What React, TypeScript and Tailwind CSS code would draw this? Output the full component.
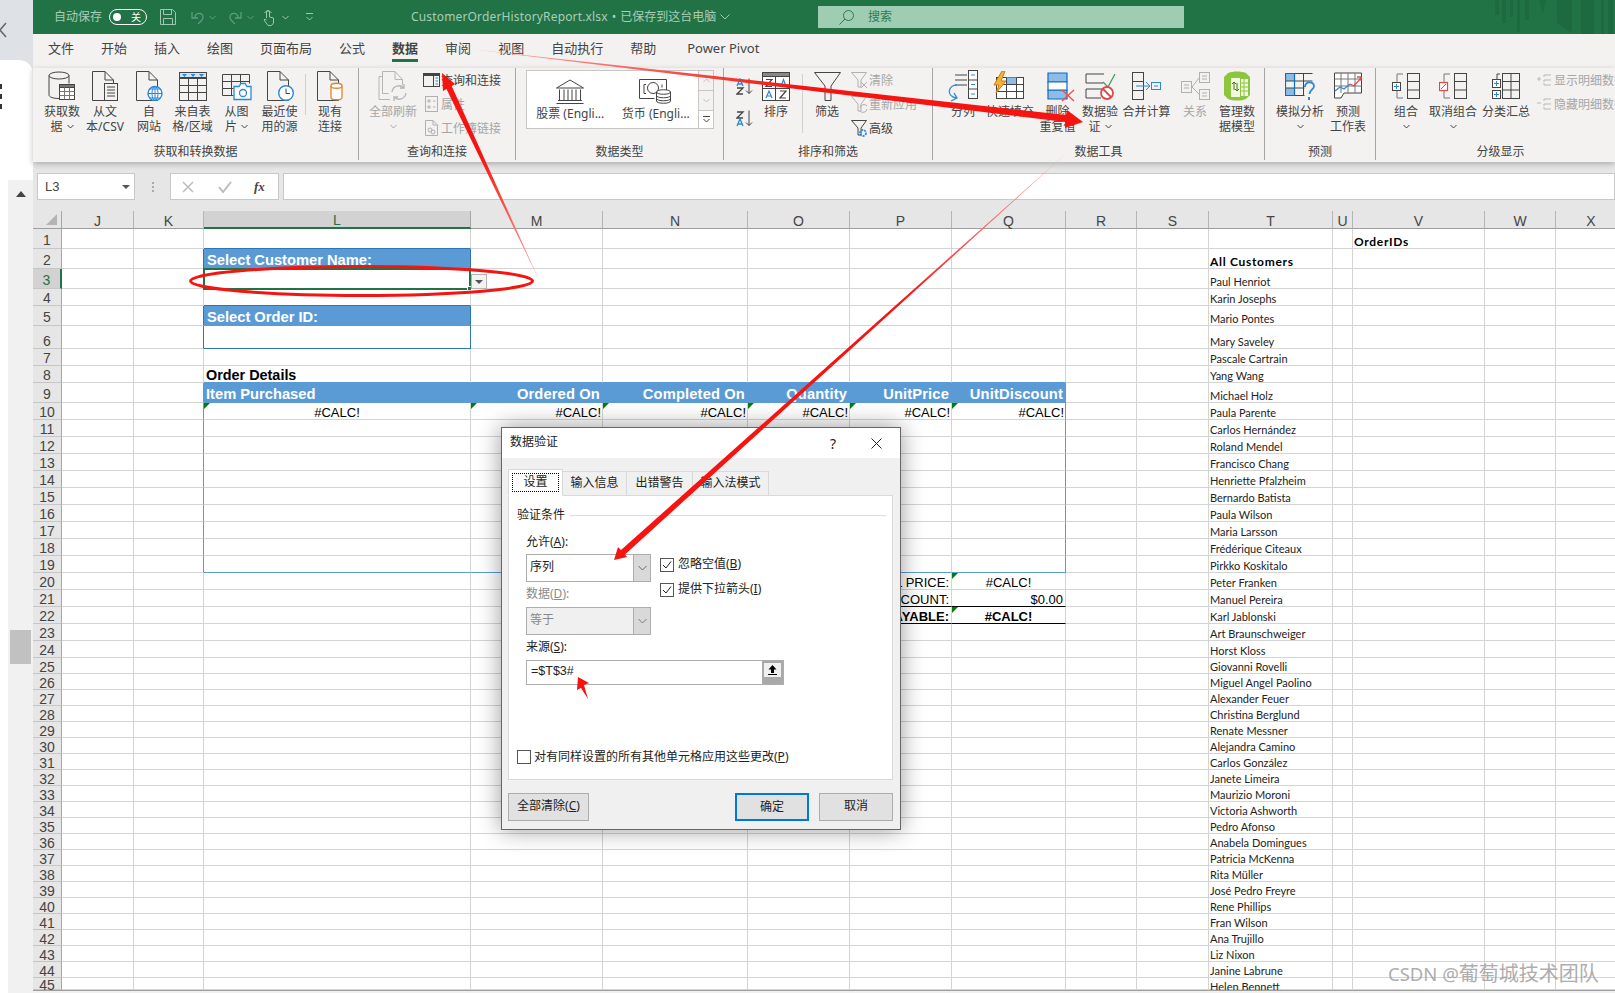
import React from "react";

const D = "#444444";
const G = "#a6a6a6";
const B = "#2b88d8";

const Svg = ({ w, h, c = D, children }: { w: number; h: number; c?: string; children: React.ReactNode }) => (
  <svg width={w} height={h} viewBox={`0 0 ${w} ${h}`} fill="none" stroke={c} strokeWidth={1} className="shrink-0">
    {children}
  </svg>
);

const Caret = ({ c = D, cls = "" }: { c?: string; cls?: string }) => (
  <svg width="7" height="5" viewBox="0 0 7 5" fill="none" stroke={c} className={`inline-block shrink-0 ${cls}`}>
    <path d="M.5 1L3.5 4L6.5 1" />
  </svg>
);

const Doc = ({ c = D }: { c?: string }) => <path d="M1.5.5H14L22.5 9V29.5H1.5Z M14 .5V9h8.5" stroke={c} />;

const IGetData = () => (
  <Svg w={28} h={30}>
    <ellipse cx="11" cy="4.5" rx="10" ry="3.5" />
    <path d="M1 4.5V24c0 2 4 3.5 10 3.5M21 4.5v8" />
    <rect x="11.5" y="13.5" width="15" height="15" fill="#fff" />
    <path d="M11.5 13.5h15v3h-15z" fill="#777" />
    <path d="M11.5 20.5h15M11.5 24.5h15M16.5 16.5v12M21.5 16.5v12" stroke="#777" />
  </Svg>
);
const IText = () => (
  <Svg w={28} h={30}>
    <Doc />
    <rect x="13.5" y="12.5" width="13" height="17" fill="#f3f2f1" />
    <path d="M16 16h8M16 19h8M16 22h8M16 25h8" />
  </Svg>
);
const IWeb = () => (
  <Svg w={28} h={30}>
    <Doc />
    <circle cx="20" cy="22.5" r="7" fill="#fff" stroke={B} strokeWidth="1.4" />
    <path d="M13 22.5h14M20 15.5v14M15 18h10M15 27h10" stroke={B} />
    <ellipse cx="20" cy="22.5" rx="3" ry="7" stroke={B} />
  </Svg>
);
const ITable = () => (
  <Svg w={28} h={29}>
    <rect x=".5" y=".5" width="27" height="28" />
    <path d="M.5 6.5h27" />
    <path d="M.5 .5h27v5H.5z" fill="#cfe4f6" />
    <path d="M3 2h5L5.5 5zM11.500 2h5L14 5zM20 2h5l-2.500 3z" fill={B} stroke="none" />
    <path d="M.5 13.500h27M.5 20.500h27M9.500 6.500v22M18.500 6.500v22" />
  </Svg>
);
const IPic = () => (
  <Svg w={30} h={30}>
    <path d="M.5 3.500h27v9M.5 3.500v21h11" />
    <path d="M.5 10.500h27M.5 17.500h11M9.500 3.500v21M18.500 3.500v9" />
    <path d="M12 15.500h5l2-3h4l2 3h4v13H12z" fill="#fff" stroke={B} strokeWidth="1.300" />
    <circle cx="21" cy="22" r="3.500" stroke={B} strokeWidth="1.300" />
  </Svg>
);
const IRecent = () => (
  <Svg w={28} h={30}>
    <Doc />
    <circle cx="20" cy="22" r="7.300" fill="#fff" stroke={B} strokeWidth="1.400" />
    <path d="M20 17.500V22.500H24" stroke={D} />
  </Svg>
);
const IExisting = () => (
  <Svg w={28} h={30}>
    <Doc />
    <path d="M15 14.500c0-3 11-3 11 0v12c0 3-11 3-11 0z" fill="#fff" stroke="#e3862a" strokeWidth="1.300" />
    <path d="M15 15c0 3 11 3 11 0" stroke="#e3862a" strokeWidth="1.300" />
  </Svg>
);
const IRefresh = () => (
  <Svg w={30} h={30} c="#b5b5b5">
    <path d="M1 5.500h3M1 5.500v23h11" />
    <path d="M4.500 .5H17L24.500 8.500V14M4.500 .5v22h6M17 .5v8h7.500" />
    <path d="M14 21a7 7 0 0 1 12-4M28 22a7 7 0 0 1-12 4" strokeWidth="1.300" />
    <path d="M26 13v4h-4M16 30v-4h4" strokeWidth="1.300" />
  </Svg>
);
const IQuery = () => (
  <Svg w={17} h={14}>
    <rect x=".5" y=".5" width="16" height="13" />
    <path d="M.5 2h16" strokeWidth="2" />
    <path d="M10.500 2.500v11" />
    <path d="M12.500 5h2.500M12.500 8h2.500M12.500 11h2.500" stroke={B} />
  </Svg>
);
const IProps = () => (
  <Svg w={13} h={16} c="#b0b0b0">
    <rect x=".5" y=".5" width="12" height="15" />
    <path d="M3 4h2v2H3zM3 10h2v2H3zM8 5h2.500M8 11h2.500" />
  </Svg>
);
const ILinks = () => (
  <Svg w={13} h={16} c="#b0b0b0">
    <path d="M.5.5H8L12.500 5V15.500H.5zM8 .5V5h4.500" />
    <circle cx="5" cy="10" r="2" />
    <circle cx="8" cy="12" r="2" />
  </Svg>
);
const IBank = () => (
  <Svg w={28} h={25}>
    <path d="M.5 9L14 1L27.500 9z" />
    <path d="M3.500 10.500V21M8 10.500V21M12 10.500V21M16 10.500V21M20 10.500V21M24.500 10.500V21M2 21.500h24M.5 24.500h27" />
  </Svg>
);
const ICurrency = () => (
  <Svg w={33} h={26}>
    <path d="M.5 1.500h27V14M.5 1.500v19h15" />
    <path d="M5 6.500v9M5 6.500h2M5 15.500h2M23 6.500v3" />
    <circle cx="14" cy="10" r="5.500" />
    <g fill="#fff">
      <path d="M17.500 14c0-3 14-3 14 0v9c0 3-14 3-14 0z" />
      <path d="M17.500 14c0 3 14 3 14 0M17.500 17.500c0 3 14 3 14 0M17.500 20.500c0 3 14 3 14 0" fill="none" />
    </g>
  </Svg>
);
const IAZ = ({ flip }: { flip?: boolean }) => (
  <Svg w={17} h={17}>
    <path d="M13 .5V15.500M10 12.500L13 15.500L16 12.500" />
    <g strokeWidth="1.300">
      {flip ? (
        <>
          <path d="M1 2h6L1 8h6" stroke={D} />
          <path d="M1 16l3-7 3 7M2 14h4" stroke={B} />
        </>
      ) : (
        <>
          <path d="M1 8l3-7 3 7M2 6h4" stroke={B} />
          <path d="M1 10h6L1 16h6" stroke={D} />
        </>
      )}
    </g>
  </Svg>
);
const ISort = () => (
  <Svg w={28} h={29}>
    <rect x=".5" y=".5" width="27" height="28" fill="#fff" />
    <path d="M.5 .5h27v4H.5z" fill="#888" />
    <path d="M.5 16.500h27M13.500 4.500v24" />
    <path d="M4 7.500h6L4 14.500h6" strokeWidth="1.200" />
    <path d="M19 14.500l2.500-7 2.500 7M20 12.500h3" stroke={B} strokeWidth="1.200" />
    <path d="M4 26l3-7 3 7M5 24h4" stroke={B} strokeWidth="1.200" />
    <path d="M18 19h6L18 26h6" strokeWidth="1.200" />
  </Svg>
);
const IFunnel = () => (
  <Svg w={27} h={29}>
    <path d="M.5.5h26L17 14v14.500h-6V14z" />
  </Svg>
);
const IMiniFunnel = ({ kind }: { kind: "x" | "r" | "a" }) => (
  <Svg w={17} h={17} c={kind === "a" ? D : "#b0b0b0"}>
    <path d="M.5.5h15L10 8v7H7V8z" />
    {kind === "x" && <path d="M10 10l6 6M16 10l-6 6" />}
    {kind === "r" && <path d="M9 12a4 4 0 0 1 7-2M16 13a4 4 0 0 1-7 2" />}
    {kind === "a" && <circle cx="12" cy="13" r="3" stroke={B} strokeWidth="1.800" strokeDasharray="2 1" />}
  </Svg>
);
const ISplit = () => (
  <Svg w={30} h={32}>
    <path d="M7 5h12M7 10h12M7 15h12" />
    <rect x="20.500" y=".5" width="9" height="28" fill="#fff" />
    <path d="M20.500 10h9M20.500 19h9" />
    <path d="M23 5h4M23 14.500h4M23 24h4" stroke={B} />
    <path d="M9 15c-9 0-11 11-1 13M3 31l6-3-3-5" stroke={B} strokeWidth="1.300" />
  </Svg>
);
const IFlash = () => (
  <Svg w={31} h={30}>
    <rect x="3.500" y="6.500" width="27" height="21" fill="#fff" />
    <path d="M13 6.500h11v7H13z" fill="#8dbde6" stroke="none" />
    <path d="M3.500 13.500h27M3.500 20.500h27M13.500 6.500v21M23.500 6.500v21" />
    <path d="M9 0L1 14h5L3 22l10-12H8l4-10z" fill="#f5b335" stroke="#c8791a" />
  </Svg>
);
const IDedupe = () => (
  <Svg w={28} h={31}>
    <path d="M1 2h19v9H1zM1 19h19v9H1z" fill="#8dbde6" stroke="#0f6cbd" strokeWidth="1.200" />
    <path d="M1 11h19v8H1z" fill="#fff" stroke="#0f6cbd" strokeWidth="1.200" />
    <path d="M15 19l12 11M27 19L15 30" stroke="#ef4d4d" strokeWidth="1.300" />
  </Svg>
);
const IValidate = () => (
  <Svg w={31} h={29}>
    <path d="M19 2H1v9h17" />
    <path d="M18 10l5 5L30 2" stroke="#3aa05a" strokeWidth="1.300" />
    <path d="M19 17H1v9h15" />
    <circle cx="22" cy="21" r="6" fill="#fff" stroke="#e24848" strokeWidth="1.800" />
    <path d="M18 17l8 8" stroke="#e24848" strokeWidth="1.800" />
  </Svg>
);
const IConsolidate = () => (
  <Svg w={29} h={28}>
    <rect x=".5" y=".5" width="11" height="27" />
    <path d="M.5 9.500h11M.5 18.500h11" />
    <path d="M4 14h13M14 10l4 4-4 4" stroke={B} />
    <rect x="19.500" y="10.500" width="9" height="7" stroke={B} />
    <path d="M22 14h4" stroke={B} />
  </Svg>
);
const IRelations = () => (
  <Svg w={29} h={28} c="#b0b0b0">
    <rect x=".5" y="9.500" width="10" height="11" />
    <rect x="18.500" y=".5" width="10" height="10" />
    <rect x="18.500" y="17.500" width="10" height="10" />
    <path d="M3 13h5M3 16h5M21 4h5M21 7h5M21 21h5M21 24h5M11 15l7-9M11 15l7 7" />
  </Svg>
);
const IModel = () => (
  <svg width="28" height="30" viewBox="0 0 28 30" className="shrink-0">
    <path d="M5 2C10 0 18 0 23 2L27 6V24L23 28C18 30 10 30 5 28L1 24V6Z" fill="#8cc63f" />
    <path d="M8 7h9v19H8zM18 8h7v17h-7z" fill="#f3f7e4" />
    <path d="M18 12h7M18 16h7M18 20h7M21 8v17" stroke="#8cc63f" />
    <path d="M11 19V11M9 13l2-2 2 2M14 12v8M12 18l2 2 2-2" stroke="#3e7a12" fill="none" />
  </svg>
);
const IWhatIf = () => (
  <Svg w={31} h={30}>
    <path d="M.5 3h9v7h-9zM.5 17h9v7h-9z" fill="#8dbde6" stroke="none" />
    <path d="M27.500 2.500H.5v22h19M.5 10h27M.5 17h19M9.500 2.500v22M18.500 2.500v22" stroke={D} />
    <path d="M.5 2.500h9v22h-9z" stroke="#0f6cbd" strokeWidth="1.200" />
    <path d="M20 16c0-6 9-6 9-1 0 4-4 3-4.500 8" stroke={B} strokeWidth="1.800" />
    <path d="M24 26v3" stroke={B} strokeWidth="2" />
  </Svg>
);
const IForecast = () => (
  <Svg w={29} h={28}>
    <path d="M.5 1h27v20H10l-3 5H.5z" fill="#fff" />
    <path d="M.5 7h27M.5 14h27M7 1v20M14 1v20M21 1v20" stroke="#777" />
    <path d="M1 19l5-4 4 2 6-5" stroke={B} strokeWidth="1.300" />
    <path d="M16 12l4 2 7-8M23 5h4v4" stroke="#e24848" strokeWidth="1.300" />
  </Svg>
);
const IGroup = ({ red }: { red?: boolean }) => (
  <Svg w={28} h={26}>
    <path d="M11 1H5v8M11 25H5v-8" stroke="#777" />
    <rect x="15.500" y=".5" width="12" height="25" />
    <path d="M15.500 8.500h12M15.500 17h12" />
    {red ? (
      <>
        <rect x=".5" y="9.500" width="8" height="8" fill="#fff" stroke="#e24848" strokeWidth="1.200" />
        <path d="M2 16l5-5" stroke="#e24848" />
      </>
    ) : (
      <>
        <rect x=".5" y="9.500" width="8" height="8" fill="#fff" />
        <path d="M2 13.500h5M4.500 11v5" stroke={B} />
      </>
    )}
  </Svg>
);
const ISubtotal = () => (
  <Svg w={28} h={26}>
    <rect x="10.500" y=".5" width="17" height="25" />
    <path d="M10.500 8.500h17M10.500 17h17M19 .5v25M5 1H8M5 1v5" />
    <rect x=".5" y="6.500" width="8" height="8" fill="#fff" />
    <rect x=".5" y="17.500" width="8" height="8" fill="#fff" />
    <path d="M2 10.500h5M4.500 8v5M2 21.500h5M4.500 19v5" stroke={B} />
  </Svg>
);
const IOutline = ({ plus }: { plus?: boolean }) => (
  <Svg w={15} h={14} c="#b8b8b8">
    <path d="M7 2h7M7 7h7M7 12h7M7 2v2M7 7v2M7 10v2" />
    <path d={plus ? "M0 6h4M2 4v4" : "M0 6h4"} />
  </Svg>
);

const Big = ({
  w,
  lines,
  icon,
  caret,
  caretLine,
  off,
  cls = "",
}: {
  w: string;
  lines: string[];
  icon: React.ReactNode;
  caret?: boolean;
  caretLine?: boolean;
  off?: boolean;
  cls?: string;
}) => (
  <div className={`flex flex-col items-center shrink-0 ${w} ${cls} ${off ? "text-[#a6a6a6]" : "text-[#444]"}`}>
    <div className="h-[36px] flex items-center justify-center">{icon}</div>
    {lines.map((l, i) => (
      <div key={i} className="leading-[15px] whitespace-nowrap flex items-center justify-center">
        {l}
        {caret && i === lines.length - 1 && <Caret cls="ml-1" />}
      </div>
    ))}
    {caretLine && (
      <div className="h-[15px] flex items-center">
        <Caret c={off ? G : D} />
      </div>
    )}
  </div>
);

const Small = ({ icon, text, off }: { icon: React.ReactNode; text: string; off?: boolean }) => (
  <div className={`h-[24px] flex items-center whitespace-nowrap ${off ? "text-[#a6a6a6]" : "text-[#444]"}`}>
    <div className="w-[18px] flex justify-center shrink-0">{icon}</div>
    <span className="ml-px pt-px">{text}</span>
  </div>
);

const Group = ({ w, label, pl, children }: { w: string; label: string; pl: string; children: React.ReactNode }) => (
  <div className={`h-[92px] flex flex-col shrink-0 border-r border-[#a6a6a6] ${w}`}>
    <div className={`flex h-[77px] ${pl}`}>{children}</div>
    <div className="text-center text-[#444] leading-[16px]">{label}</div>
  </div>
);

const Ribbon = () => (
  <div className="flex h-[94px] bg-[#f3f2f1] text-[12px] overflow-hidden relative z-[2] shadow-[0_2px_6px_rgba(0,0,0,0.25)]">
    <Group w="w-[326px]" label="获取和转换数据" pl="pl-[8px]">
      <Big w="w-[42px]" lines={["获取数", "据"]} caret icon={<IGetData />} />
      <Big w="w-[44px]" lines={["从文", "本/CSV"]} icon={<IText />} />
      <Big w="w-[44px]" lines={["自", "网站"]} icon={<IWeb />} />
      <Big w="w-[43px]" lines={["来自表", "格/区域"]} icon={<ITable />} />
      <Big w="w-[45px]" lines={["从图", "片"]} caret icon={<IPic />} />
      <Big w="w-[41px]" lines={["最近使", "用的源"]} icon={<IRecent />} />
      <div className="w-px h-[41px] bg-[#d0d0d0] ml-[5px] mt-[6px]" />
      <Big w="w-[40px]" cls="ml-[4px]" lines={["现有", "连接"]} icon={<IExisting />} />
    </Group>
    <Group w="w-[157px]" label="查询和连接" pl="pl-[9px]">
      <Big w="w-[50px]" off lines={["全部刷新"]} caretLine icon={<IRefresh />} />
      <div className="ml-[4px]">
        <Small icon={<IQuery />} text="查询和连接" />
        <Small off icon={<IProps />} text="属性" />
        <Small off icon={<ILinks />} text="工作簿链接" />
      </div>
    </Group>
    <Group w="w-[208px]" label="数据类型" pl="pl-[10px] pt-[2px]">
      <div className="w-[188px] h-[59px] bg-white border border-[#c8c6c4] flex">
        <div className="w-[87px] flex flex-col items-center text-[#444]">
          <div className="h-[33px] flex items-end">
            <IBank />
          </div>
          <div className="leading-[16px] mt-[2px] whitespace-nowrap">股票 (Engli...</div>
        </div>
        <div className="w-[85px] flex flex-col items-center text-[#444]">
          <div className="h-[33px] flex items-end">
            <ICurrency />
          </div>
          <div className="leading-[16px] mt-[2px] whitespace-nowrap">货币 (Engli...</div>
        </div>
        <div className="w-[15px] flex flex-col bg-[#f3f2f1] border-l border-[#c8c6c4]">
          <div className="h-[20px] flex items-center justify-center border-b border-[#c8c6c4]">
            <svg width="7" height="5" viewBox="0 0 7 5" fill="none" stroke="#c0c0c0">
              <path d="M.5 4L3.500 1L6.500 4" />
            </svg>
          </div>
          <div className="h-[20px] flex items-center justify-center border-b border-[#c8c6c4]">
            <Caret c="#c0c0c0" />
          </div>
          <div className="flex-1 flex flex-col items-center justify-center bg-white">
            <div className="w-[7px] h-px bg-[#444] mb-px" />
            <Caret />
          </div>
        </div>
      </div>
    </Group>
    <Group w="w-[209px]" label="排序和筛选" pl="pl-[12px]">
      <div className="w-[17px]">
        <div className="h-[28px] flex items-end pb-px">
          <IAZ />
        </div>
        <div className="h-[32px] flex items-end pb-[1px]">
          <IAZ flip />
        </div>
      </div>
      <Big w="w-[36px]" cls="ml-[5px]" lines={["排序"]} icon={<ISort />} />
      <div className="w-px h-[59px] bg-[#d0d0d0] ml-[8px] mt-[6px]" />
      <Big w="w-[36px]" cls="ml-[6px]" lines={["筛选"]} icon={<IFunnel />} />
      <div className="ml-[5px]">
        <Small off icon={<IMiniFunnel kind="x" />} text="清除" />
        <Small off icon={<IMiniFunnel kind="r" />} text="重新应用" />
        <Small icon={<IMiniFunnel kind="a" />} text="高级" />
      </div>
    </Group>
    <Group w="w-[332px]" label="数据工具" pl="pl-[8px]">
      <Big w="w-[44px]" lines={["分列"]} icon={<ISplit />} />
      <Big w="w-[50px]" lines={["快速填充"]} icon={<div className="-ml-[3px]"><IFlash /></div>} />
      <Big w="w-[45px]" lines={["删除", "重复值"]} icon={<div className="ml-[7px]"><IDedupe /></div>} />
      <Big w="w-[40px]" lines={["数据验", "证"]} caret icon={<IValidate />} />
      <Big w="w-[53px]" lines={["合并计算"]} icon={<IConsolidate />} />
      <Big w="w-[44px]" off lines={["关系"]} icon={<IRelations />} />
      <Big w="w-[40px]" lines={["管理数", "据模型"]} icon={<IModel />} />
    </Group>
    <Group w="w-[111px]" label="预测" pl="pl-[8px]">
      <Big w="w-[54px]" lines={["模拟分析"]} caretLine icon={<IWhatIf />} />
      <Big w="w-[42px]" lines={["预测", "工作表"]} icon={<IForecast />} />
    </Group>
    <Group w="w-[250px]" label="分级显示" pl="pl-[10px]">
      <Big w="w-[40px]" lines={["组合"]} caretLine icon={<IGroup />} />
      <Big w="w-[54px]" lines={["取消组合"]} caretLine icon={<IGroup red />} />
      <Big w="w-[52px]" lines={["分类汇总"]} icon={<ISubtotal />} />
      <div className="ml-[3px]">
        <Small off icon={<IOutline plus />} text="显示明细数据" />
        <Small off icon={<IOutline />} text="隐藏明细数据" />
      </div>
    </Group>
  </div>
);

const TitleBar = () => {
  const m = "#9fc7b1";
  return (
    <div className="h-[34px] bg-[#217346] flex items-center text-[12px] text-[#a8cdb9] relative shrink-0 pl-[21px]">
      <span className="w-[48px] whitespace-nowrap">自动保存</span>
      <div className="ml-[7px] w-[38px] h-[16px] rounded-full border border-white flex items-center px-[3px] justify-between shrink-0">
        <div className="w-[8px] h-[8px] rounded-full bg-white" />
        <span className="text-[10px] text-white leading-none mr-[2px]">关</span>
      </div>
      <div className="ml-[13px] flex">
        <Svg w={16} h={16} c={m}>
          <path d="M.5.5h12l3 3v12H.5z M3.500.5v5h8v-5 M3.500 15.500v-6h9v6" />
        </Svg>
      </div>
      <div className="ml-[15px] flex items-center">
        <Svg w={13} h={16} c="#5f9d7d">
          <path d="M4 9C4 3 12 3 12 8c0 3-3 5-5 7M1 3v6h6" strokeWidth="1.300" />
        </Svg>
        <Caret c="#5f9d7d" cls="ml-[5px]" />
      </div>
      <div className="ml-[12px] flex items-center">
        <Svg w={14} h={16} c="#5f9d7d">
          <path d="M10 9C10 3 2 3 2 8c0 3 3 5 5 7M13 3v6H7" strokeWidth="1.300" />
        </Svg>
        <Caret c="#5f9d7d" cls="ml-[5px]" />
      </div>
      <div className="ml-[9px] flex items-center">
        <Svg w={12} h={17} c={m}>
          <path d="M3.500 9V3a1.500 1.500 0 0 1 3 0v5l4 1v5l-2 2.500H5L1 11l1-1 1.500 1M1.500 4a4 4 0 0 1 7 0" />
        </Svg>
        <Caret c={m} cls="ml-[7px]" />
      </div>
      <div className="ml-[17px] flex flex-col items-center gap-[2px]">
        <div className="w-[7px] h-px bg-[#9fc7b1]" />
        <Caret c={m} />
      </div>
      <div className="ml-[98px] w-[407px] flex items-center whitespace-nowrap shrink-0">
        <span className="tracking-[0.16px]">CustomerOrderHistoryReport.xlsx</span>
        <span className="mx-[4px]">•</span>
        <span>已保存到这台电脑</span>
        <svg width="10" height="6" viewBox="0 0 10 6" fill="none" stroke={m} className="ml-[4px] shrink-0">
          <path d="M.5 .5L5 5L9.500 .5" />
        </svg>
      </div>
      <div className="w-[366px] h-[22px] bg-[#9fcdb3] flex items-center pl-[21px] text-[#2f7a52] shrink-0">
        <Svg w={15} h={15} c="#2f7a52">
          <circle cx="9.500" cy="5.500" r="5" />
          <path d="M6 9L.5 14.500" />
        </Svg>
        <span className="ml-[14px]">搜索</span>
      </div>
      <svg width="125" height="34" viewBox="0 0 125 34" className="absolute right-0 top-0" fill="#1d6a40">
        <path d="M5 0h4v15H5zM12 0h4v23h-4zM20 0h3v17h-3zM27 0h3v32h-3zM35 0h4v20h-4zM49 0h7l-3 14zM67 0h15v33L67 23zM91 0h13v34H91zM111 0h3v34h-3zM118 0h5v34h-5z" />
      </svg>
    </div>
  );
};

const Tabs = () => (
  <div className="h-[34px] bg-[#f3f2f1] flex pl-[15px] text-[13px] text-[#444] shrink-0 gap-[27px]">
    {["文件", "开始", "插入", "绘图", "页面布局", "公式", "数据", "审阅", "视图", "自动执行", "帮助"].map((t) => (
      <div
        key={t}
        className={`h-[28px] flex items-center border-b-[3px] whitespace-nowrap pt-[4px] ${
          t === "数据" ? "border-[#217346] font-semibold" : "border-transparent"
        }`}
      >
        {t}
      </div>
    ))}
    <div className="h-[28px] flex items-center pt-[4px] pb-[3px] ml-[4px] whitespace-nowrap">Power Pivot</div>
  </div>
);

const FormulaBar = () => (
  <div className="h-[49px] bg-[#e6e6e6] flex pt-[11px] pl-[4px] shrink-0 text-[#444]">
    <div className="w-[98px] h-[27px] bg-white border border-[#c8c8c8] flex items-center justify-between pl-[7px] pr-[4px] text-[13px] font-['Liberation_Sans',sans-serif]">
      L3
      <div className="w-0 h-0 border-x-[4px] border-t-[4px] border-x-transparent border-t-[#555]" />
    </div>
    <div className="w-[35px] h-[27px] flex items-center justify-center">
      <div className="flex flex-col gap-[2px]">
        <div className="w-[2px] h-[2px] bg-[#aaa]" />
        <div className="w-[2px] h-[2px] bg-[#aaa]" />
        <div className="w-[2px] h-[2px] bg-[#aaa]" />
      </div>
    </div>
    <div className="w-[109px] h-[27px] bg-white border border-[#c8c8c8] flex items-center pl-[11px]">
      <Svg w={12} h={12} c="#bcbcbc">
        <path d="M1 1l10 10M11 1L1 11" strokeWidth="1.500" />
      </Svg>
      <div className="ml-[24px]">
        <Svg w={14} h={12} c="#bcbcbc">
          <path d="M1 6l4 5 8-10" strokeWidth="2" />
        </Svg>
      </div>
      <span className="ml-[22px] text-[13px] italic font-['Liberation_Serif',serif] font-bold">fx</span>
    </div>
    <div className="ml-[4px] flex-1 h-[27px] bg-white border border-[#c8c8c8]" />
  </div>
);

const COLS = ["", "J", "K", "L", "M", "N", "O", "P", "Q", "R", "S", "T", "U", "V", "W", "X"];
const NAMES = "All Customers|Paul Henriot|Karin Josephs|Mario Pontes|Mary Saveley|Pascale Cartrain|Yang Wang|Michael Holz|Paula Parente|Carlos Hernández|Roland Mendel|Francisco Chang|Henriette Pfalzheim|Bernardo Batista|Paula Wilson|Maria Larsson|Frédérique Citeaux|Pirkko Koskitalo|Peter Franken|Manuel Pereira|Karl Jablonski|Art Braunschweiger|Horst Kloss|Giovanni Rovelli|Miguel Angel Paolino|Alexander Feuer|Christina Berglund|Renate Messner|Alejandra Camino|Carlos González|Janete Limeira|Maurizio Moroni|Victoria Ashworth|Pedro Afonso|Anabela Domingues|Patricia McKenna|Rita Müller|José Pedro Freyre|Rene Phillips|Fran Wilson|Ana Trujillo|Liz Nixon|Janine Labrune|Helen Bennett".split(
  "|"
);
const TABLE = ["L", "M", "N", "O", "P", "Q"];

const Tri = () => (
  <div className="absolute left-0 top-0 w-0 h-0 border-t-[6px] border-r-[6px] border-t-[#008000] border-r-transparent" />
);

const bodyText = (r: number, c: string): { t: string; cls: string } | null => {
  const wb = "text-white font-bold text-[14.7px]";
  if (c === "L" && r === 2) return { t: "Select Customer Name:", cls: `pl-[3px] ${wb}` };
  if (c === "L" && r === 5) return { t: "Select Order ID:", cls: `pl-[3px] ${wb}` };
  if (c === "L" && r === 8) return { t: "Order Details", cls: "pl-[2px] font-bold text-[14.400px] text-black" };
  if (r === 9) {
    const h: Record<string, string> = {
      L: "Item Purchased",
      M: "Ordered On",
      N: "Completed On",
      O: "Quantity",
      P: "UnitPrice",
      Q: "UnitDiscount",
    };
    if (h[c]) return { t: h[c], cls: `${c === "L" ? "pl-[2px]" : "justify-end pr-[2px] tracking-[0.15px]"} ${wb}` };
  }
  if (r === 10 && TABLE.includes(c))
    return { t: "#CALC!", cls: `text-[13px] text-black ${c === "L" ? "justify-center" : "justify-end pr-px"}` };
  if (c === "P" && r === 20) return { t: "TOTAL PRICE:", cls: "justify-end pr-[2px] text-[13px] text-black" };
  if (c === "P" && r === 21) return { t: "DISCOUNT:", cls: "justify-end pr-[2px] text-[13px] text-black" };
  if (c === "P" && r === 22) return { t: "AMOUNT PAYABLE:", cls: "justify-end pr-[2px] text-[13px] font-bold text-black" };
  if (c === "Q" && r === 20) return { t: "#CALC!", cls: "justify-center text-[13px] text-black" };
  if (c === "Q" && r === 21) return { t: "$0.00", cls: "justify-end pr-[2px] text-[13px] text-black" };
  if (c === "Q" && r === 22) return { t: "#CALC!", cls: "justify-center text-[13px] font-bold text-black" };
  return null;
};

const rightBorder = (r: number, c: string) => {
  if (r >= 10 && r <= 19 && (c === "K" || c === "Q")) return "border-r-[#5b9bd5]";
  if (r === 9 && (c === "K" || TABLE.includes(c))) return "border-r-[#5b9bd5]";
  if ((c === "K" || c === "L") && (r === 2 || r === 5 || r === 6)) return "border-r-[#2e75b6]";
  return "border-r-[#d4d4d4]";
};
const bottomBorder = (r: number, c: string) => {
  if ((r === 21 || r === 22) && (c === "O" || c === "P" || c === "Q")) return "border-b-black";
  if ((r === 8 || r === 9 || r === 19) && TABLE.includes(c)) return "border-b-[#5b9bd5]";
  if (c === "L" && (r === 1 || r === 4 || r === 6)) return "border-b-[#2e75b6]";
  if (c === "L" && (r === 2 || r === 5)) return "border-b-[#5b9bd5]";
  return "border-b-[#d4d4d4]";
};

const Sheet = () => {
  const cells: React.ReactNode[] = [];
  COLS.forEach((c, i) => {
    if (i === 0) {
      cells.push(
        <div key="corner" className="bg-[#e6e6e6] border-b border-b-[#9e9e9e] border-r border-r-[#a6a6a6] flex items-end justify-end pr-[4px] pb-[3px]">
          <svg width="11" height="11">
            <path d="M11 0V11H0Z" fill="#b4b4b4" />
          </svg>
        </div>
      );
    } else {
      cells.push(
        <div
          key={c}
          className={
            c === "L"
              ? "bg-[#d2d2d2] border-b-2 border-b-[#217346] border-r border-r-[#a6a6a6] flex items-center justify-center text-[14px] text-[#217346] pt-[3px]"
              : "bg-[#e6e6e6] border-b border-b-[#9e9e9e] border-r border-r-[#b4b4b4] flex items-center justify-center text-[14px] text-[#444] pt-[3px]"
          }
        >
          {c}
        </div>
      );
    }
  });
  for (let r = 1; r <= 45; r++) {
    COLS.forEach((c, i) => {
      if (i === 0) {
        cells.push(
          <div
            key={`${r}${c}`}
            className={
              r === 3
                ? "bg-[#d2d2d2] border-b border-b-[#c6c6c6] border-r-2 border-r-[#217346] flex items-center justify-center text-[14px] text-[#217346] pt-[4px]"
                : r === 6
                  ? "bg-[#e6e6e6] border-b border-b-[#c6c6c6] border-r border-r-[#a6a6a6] flex items-center justify-center text-[14px] text-[#444] pt-[8px]"
                  : "bg-[#e6e6e6] border-b border-b-[#c6c6c6] border-r border-r-[#a6a6a6] flex items-center justify-center text-[14px] text-[#444] pt-[3px]"
            }
          >
            {r}
          </div>
        );
        return;
      }
      const body = bodyText(r, c);
      const blue = (c === "L" && (r === 2 || r === 5)) || (r === 9 && TABLE.includes(c));
      const nameIdx = c === "T" ? r - 2 : -1;
      const isName = nameIdx >= 0 && nameIdx < NAMES.length;
      const isTri = (r === 10 && TABLE.includes(c)) || (c === "Q" && (r === 20 || r === 22));
      cells.push(
        <div
          key={`${r}${c}`}
          className={`relative flex border-r border-b whitespace-nowrap min-w-0 ${rightBorder(r, c)} ${bottomBorder(r, c)} ${
            blue ? "bg-[#5b9bd5]" : ""
          } ${isName || (c === "V" && r === 1) ? (r === 45 ? "items-start pt-[2px]" : "items-end") : "items-center pt-[3px]"} ${body ? body.cls : ""}`}
        >
          {body && body.t}
          {isName && (
            <span
              className={`pl-[1px] -mb-px font-['Lato',sans-serif] leading-[14px] ${
                nameIdx === 0 ? "font-bold text-black text-[12px] tracking-[0.7px]" : "text-[11px] text-[#222]"
              }`}
            >
              {NAMES[nameIdx]}
            </span>
          )}
          {c === "V" && r === 1 && (
            <span className="pl-[1px] -mb-px font-['Lato',sans-serif] text-[12px] tracking-[0.7px] leading-[14px] font-bold text-black">
              OrderIDs
            </span>
          )}
          {isTri && <Tri />}
          {c === "L" && r === 3 && (
            <>
              <div className="absolute -left-px -top-px -right-px -bottom-[2px] border-2 border-[#217346] z-10" />
              <div className="absolute -right-[2px] -bottom-[3px] w-[5px] h-[5px] bg-[#217346] border border-white z-10" />
              <div className="absolute left-[267px] top-[5px] w-[16px] h-[15px] bg-[#f3f3f3] border border-[#b4b4b4] flex items-center justify-center z-10">
                <div className="w-0 h-0 border-x-[4px] border-t-[4px] border-x-transparent border-t-[#555]" />
              </div>
            </>
          )}
        </div>
      );
    });
  }
  return (
    <div className="h-[779px] w-[1582px] overflow-hidden grid grid-cols-[29px_72px_70px_267px_132px_145px_102px_102px_114px_71px_72px_124px_20px_132px_71px_71px] grid-rows-[18px_20px_20px_20px_17px_20px_23px_17px_17px_20px_17px_repeat(14,17px)_repeat(20,16px)_12px] bg-white font-['Liberation_Sans',sans-serif] shrink-0">
      {cells}
    </div>
  );
};

const U = ({ children }: { children: React.ReactNode }) => <span className="underline">{children}</span>;

const Check = ({ on }: { on?: boolean }) => (
  <svg width="14" height="14" viewBox="0 0 14 14" fill="none" className="shrink-0">
    <rect x=".5" y=".5" width="13" height="13" fill="#fff" stroke="#555" />
    {on && <path d="M3 7l3 3 5-6.500" stroke="#222" />}
  </svg>
);

const ComboArrow = ({ dim }: { dim?: boolean }) => (
  <div className="w-[17px] h-full bg-[#d9d9d9] border-l border-[#adadad] flex items-center justify-center shrink-0">
    <svg width="9" height="6" viewBox="0 0 9 6" fill="none" stroke={dim ? "#777" : "#666"}>
      <path d="M.5 1L4.500 5L8.500 1" />
    </svg>
  </div>
);

const DialogBox = () => (
  <div className="absolute left-[501px] top-[427px] w-[400px] h-[403px] bg-[#f0f0f0] border border-[#666] shadow-[0_0_22px_rgba(0,0,0,0.4)] z-20 flex flex-col text-[12px] text-[#222]">
    <div className="h-[30px] bg-white flex items-center pl-[8px] shrink-0">
      <span className="w-[320px] pb-[2px]">数据验证</span>
      <span className="text-[14px] w-[10px]">?</span>
      <div className="ml-[31px]">
        <Svg w={11} h={11} c="#222">
          <path d="M.5.5l10 10M10.500.5l-10 10" />
        </Svg>
      </div>
    </div>
    <div className="flex pl-[6px] h-[37px] items-end shrink-0 relative top-px z-[1]">
      <div className="w-[55px] h-[27px] bg-white border border-[#d9d9d9] border-b-white p-[3px] mb-0">
        <div className="h-full border border-dotted border-black flex items-center justify-center pb-[2px]">设置</div>
      </div>
      <div className="w-[64px] h-[25px] bg-[#f0f0f0] border border-l-0 border-[#d9d9d9] flex items-center justify-center pb-[2px]">输入信息</div>
      <div className="w-[66px] h-[25px] bg-[#f0f0f0] border border-l-0 border-[#d9d9d9] flex items-center justify-center pb-[2px]">出错警告</div>
      <div className="w-[76px] h-[25px] bg-[#f0f0f0] border border-l-0 border-[#d9d9d9] flex items-center justify-center pb-[2px]">输入法模式</div>
    </div>
    <div className="mx-[6px] w-[385px] h-[285px] bg-white border border-[#d9d9d9] shrink-0 pt-[10px] pl-[8px] pr-[6px]">
      <div className="flex items-center h-[18px]">
        <span>验证条件</span>
        <div className="flex-1 h-px bg-[#dcdcdc] ml-[5px]" />
      </div>
      <div className="pl-[9px]">
        <div className="flex mt-[10px]">
          <div className="w-[125px] shrink-0">
            <div className="h-[16px] leading-[16px]">
              允许(<U>A</U>):
            </div>
            <div className="mt-[4px] h-[28px] bg-white border border-[#adadad] flex items-center pl-[3px] justify-between">
              <span className="pb-[2px]">序列</span>
              <ComboArrow />
            </div>
            <div className="mt-[4px] h-[16px] leading-[16px] text-[#8a8a8a]">
              数据(<U>D</U>):
            </div>
            <div className="mt-[5px] h-[28px] bg-[#f0f0f0] border border-[#adadad] flex items-center pl-[3px] justify-between text-[#8a8a8a]">
              <span className="pb-[2px]">等于</span>
              <ComboArrow dim />
            </div>
          </div>
          <div className="ml-[9px] pt-[24px] flex flex-col gap-[11px]">
            <div className="flex items-center gap-[4px] h-[14px]">
              <Check on />
              <span className="pb-[2px]">
                忽略空值(<U>B</U>)
              </span>
            </div>
            <div className="flex items-center gap-[4px] h-[14px]">
              <Check on />
              <span className="pb-[2px]">
                提供下拉箭头(<U>I</U>)
              </span>
            </div>
          </div>
        </div>
        <div className="mt-[4px] h-[16px] leading-[16px]">
          来源(<U>S</U>):
        </div>
        <div className="mt-[5px] w-[258px] h-[25px] bg-white border border-[#adadad] flex items-center pl-[4px] justify-between">
          <span className="font-['Liberation_Sans',sans-serif] text-[12.500px] pb-[2px]">=$T$3#</span>
          <div className="w-[21px] h-full bg-[#a9a9a9] p-[2px] flex">
            <div className="flex-1 h-[14px] bg-[#f0f0f0] flex items-center justify-center">
              <svg width="9" height="10" viewBox="0 0 9 10" fill="#000">
                <path d="M4.500 0L8.500 4.500H6V8H3V4.500H.5ZM0 9h9v1H0z" />
              </svg>
            </div>
          </div>
        </div>
      </div>
      <div className="flex items-center gap-[3px] mt-[64px] h-[16px]">
        <Check />
        <span className="whitespace-nowrap">
          对有同样设置的所有其他单元格应用这些更改(<U>P</U>)
        </span>
      </div>
    </div>
    <div className="flex pl-[6px] mt-[13px]">
      <div className="w-[81px] h-[28px] bg-[#e1e1e1] border border-[#adadad] flex items-center justify-center pb-[2px]">
        全部清除(<U>C</U>)
      </div>
      <div className="ml-[146px] w-[74px] h-[28px] bg-[#e1e1e1] border-2 border-[#0078d7] flex items-center justify-center pb-[1px]">确定</div>
      <div className="ml-[10px] w-[74px] h-[28px] bg-[#e1e1e1] border border-[#adadad] flex items-center justify-center pb-[2px]">取消</div>
    </div>
  </div>
);

const Marks = () => (
  <svg width="1615" height="993" viewBox="0 0 1615 993" className="absolute left-0 top-0 z-30 pointer-events-none">
    <defs>
      <linearGradient id="a1" gradientUnits="userSpaceOnUse" x1="470" y1="49" x2="800" y2="88">
        <stop offset="0" stopColor="#ffb0a8" />
        <stop offset="1" stopColor="#f5140f" />
      </linearGradient>
      <linearGradient id="a2" gradientUnits="userSpaceOnUse" x1="540" y1="282" x2="480" y2="155">
        <stop offset="0" stopColor="#ffb0a8" />
        <stop offset="1" stopColor="#f5140f" />
      </linearGradient>
      <linearGradient id="a3" gradientUnits="userSpaceOnUse" x1="1070" y1="150" x2="900" y2="303">
        <stop offset="0" stopColor="#ffb0a8" />
        <stop offset="1" stopColor="#f5140f" />
      </linearGradient>
    </defs>
    <polygon points="470,49 1066,115 1067,110 1083,122 1065,128 1065,122" fill="url(#a1)" />
    <polygon points="442,73 455,84 451.700,86 540,282 446.500,89 443,91" fill="url(#a2)" />
    <polygon points="1070,150 625,554.500 627,557 614,560 618,547 621,550" fill="url(#a3)" />
    <ellipse cx="361.500" cy="281" rx="171" ry="14.500" fill="none" stroke="#f5140f" strokeWidth="3" />
    <polygon points="578,677 589,683 584,685 588,699 581,688 577,690" fill="#f5140f" />
  </svg>
);

const LeftStrip = () => (
  <div className="w-[33px] h-full flex flex-col shrink-0 bg-white">
    <div className="h-[60px] bg-[#dee1e6] pt-[22px] shrink-0">
      <svg width="7" height="16" viewBox="0 0 7 16" fill="none" stroke="#666" strokeWidth="1.500">
        <path d="M6 1L0 8L6 15" />
      </svg>
    </div>
    <div className="h-[120px] bg-[#dee1e6] shrink-0">
      <div className="h-full bg-white rounded-tr-[14px] pt-[24px] flex flex-col gap-[5px]">
        <div className="w-[2px] h-[5px] bg-[#333]" />
        <div className="w-[2px] h-[5px] bg-[#333]" />
        <div className="w-[2px] h-[5px] bg-[#333]" />
      </div>
    </div>
    <div className="flex-1 flex bg-white">
      <div className="ml-[8px] flex-1 bg-[#f1f1f1] flex flex-col items-center">
        <div className="mt-[11px] w-0 h-0 border-x-[5px] border-b-[6px] border-x-transparent border-b-[#444]" />
        <div className="mt-[433px] w-[21px] h-[34px] bg-[#c1c1c1]" />
      </div>
    </div>
  </div>
);

export default function App() {
  return (
    <div className="relative w-[1615px] h-[993px] overflow-hidden flex bg-white font-['Noto_Sans','Noto_Sans_CJK_SC',sans-serif]">
      <LeftStrip />
      <div className="w-[1582px] shrink-0 flex flex-col">
        <TitleBar />
        <Tabs />
        <Ribbon />
        <FormulaBar />
        <Sheet />
        <div className="flex-1 bg-[#f0f0f0] border-t border-[#9e9e9e]" />
      </div>
      <DialogBox />
      <Marks />
      <div className="absolute left-[1388px] top-[961px] leading-[26px] text-[#9a9a9a] opacity-80 z-30 whitespace-nowrap">
        <span className="text-[18.500px]">CSDN @</span>
        <span className="text-[20px]">葡萄城技术团队</span>
      </div>
    </div>
  );
}
